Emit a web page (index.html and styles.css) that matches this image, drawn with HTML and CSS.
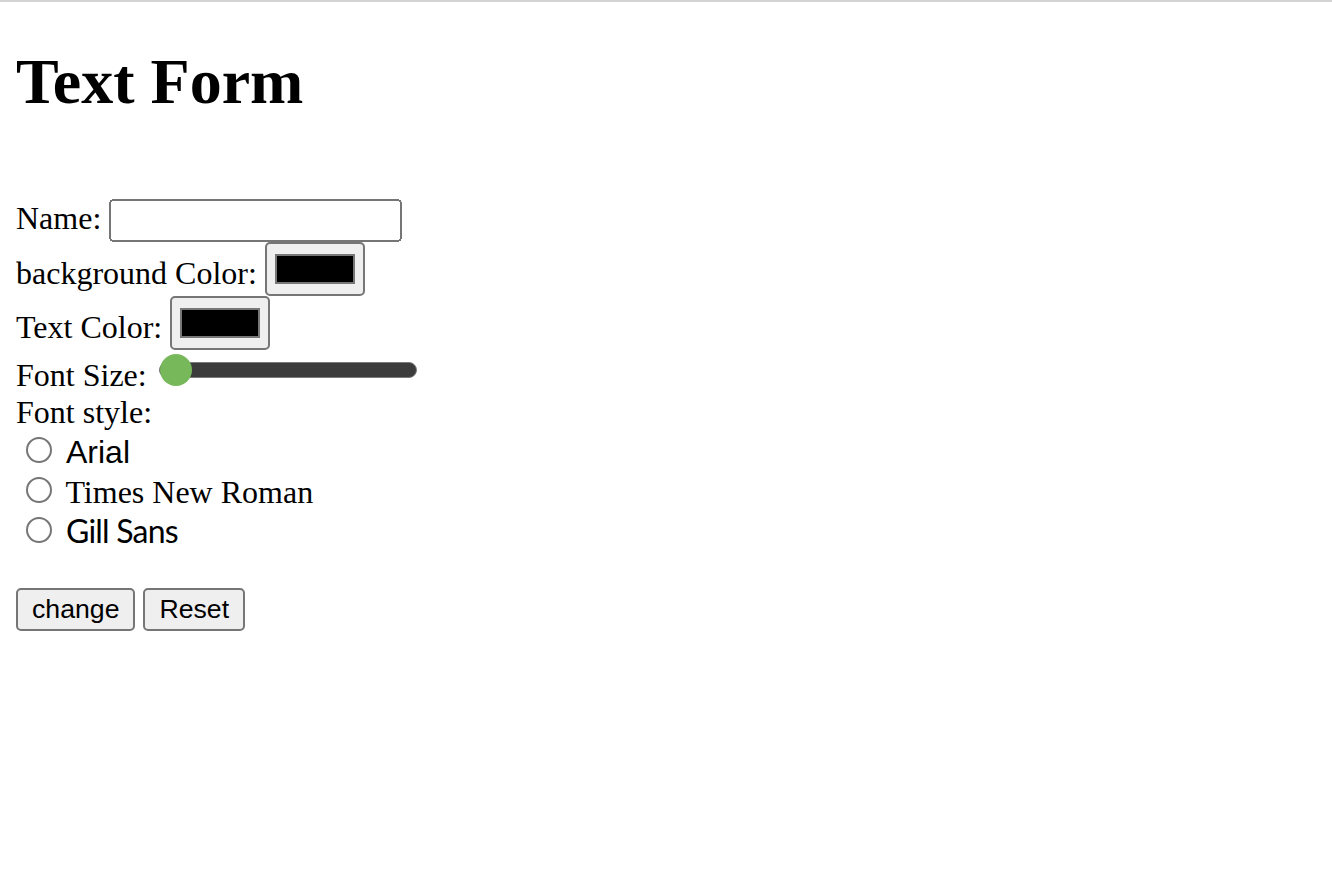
FILE: index.html
```html
<!DOCTYPE html>
<html lang="en">
<head>
<meta charset="utf-8">
<title>Text Form</title>
<link rel="stylesheet" href="styles.css">
</head>
<body class="page">
<h1 class="title">Text Form</h1>
<br>
<form class="text-form">
  Name: <input class="field-text" type="text"><br>
  background Color: <input class="field-color" type="color" value="#000000"><br>
  Text Color: <input class="field-color" type="color" value="#000000"><br>
  Font Size: <input class="field-range" type="range" min="10" max="60" value="10"><br>
  Font style:<br>
  <input class="field-radio" type="radio" name="font" id="f1"> <label class="opt opt-arial" for="f1">Arial</label><br>
  <input class="field-radio" type="radio" name="font" id="f2"> <label class="opt opt-times" for="f2">Times New Roman</label><br>
  <input class="field-radio" type="radio" name="font" id="f3"> <label class="opt opt-gill" for="f3">Gill Sans</label><br>
  <br>
  <button class="btn" type="button">change</button>
  <button class="btn" type="reset">Reset</button>
</form>
</body>
</html>
```

FILE: styles.css
```css
html {
  zoom: 2;
  border-top: 1px solid #d3d3d3;
  background: #ffffff;
}

.page {
  margin: 8px;
  font-family: "Liberation Serif", "Times New Roman", serif;
  font-size: 16px;
  color: #000000;
}

.title {
  font-size: 32px;
  font-weight: bold;
  margin: 13.44px 0 21.44px;
}

.text-form {
  margin: 0;
}

.field-text {
  box-sizing: border-box;
  width: 146.5px;
  font-family: "Liberation Sans", Arial, sans-serif;
  font-size: 13.333px;
}

.field-range {
  -webkit-appearance: none;
  appearance: none;
  width: 129px;
  height: 16px;
  margin: 2px;
  background: transparent;
  vertical-align: 0;
}

.field-range::-webkit-slider-runnable-track {
  height: 8px;
  background: #3c3c3c;
  border: 0.5px solid #7a7a7a;
  border-radius: 4px;
  box-sizing: border-box;
}

.field-range::-webkit-slider-thumb {
  -webkit-appearance: none;
  appearance: none;
  width: 16px;
  height: 16px;
  border-radius: 50%;
  background: #77b85a;
  border: none;
  margin-top: -4.5px;
}

.opt-arial {
  font-family: "Liberation Sans", Arial, sans-serif;
}

.opt-times {
  font-family: "Liberation Serif", "Times New Roman", serif;
}

.opt-gill {
  font-family: Lato, "Gill Sans", sans-serif;
  letter-spacing: -0.4px;
}

.btn {
  font-family: "Liberation Sans", Arial, sans-serif;
  font-size: 13.333px;
}
```
